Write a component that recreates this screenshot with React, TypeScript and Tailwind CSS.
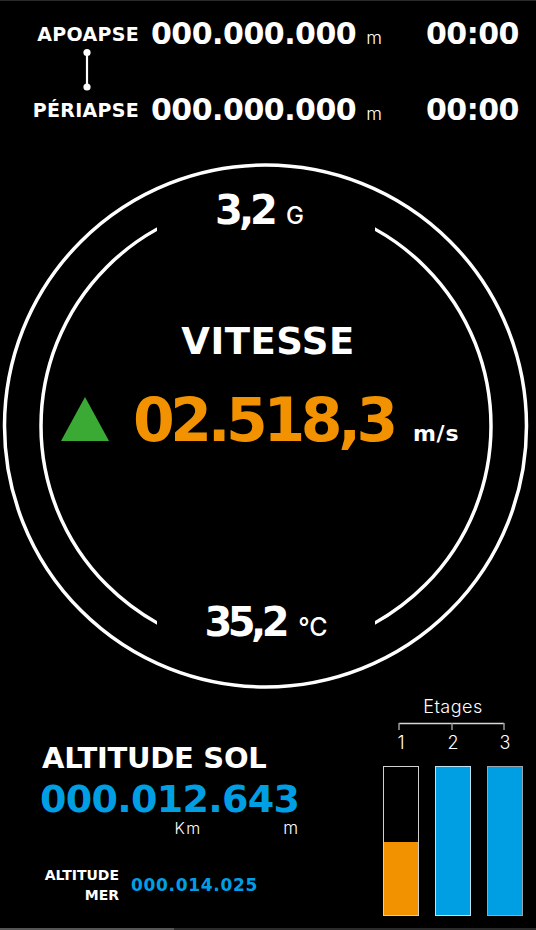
import React from "react";

const B = "font-['DejaVu_Sans',sans-serif] font-bold";
const L = "font-['Inter',sans-serif] font-light";
const M = "font-['Inter',sans-serif] font-medium";

const OrbitRow: React.FC<{ label: string }> = ({ label }) => (
  <div className="flex h-[30px] items-center">
    <span className={`w-[139px] text-right text-[19px] leading-none tracking-[0.3px] ${B}`}>{label}</span>
    <div className="ml-[12px] flex items-baseline">
      <span className={`text-[30px] leading-none tracking-[-0.5px] ${B}`}>000.000.000</span>
      <span className={`ml-[10px] text-[18px] leading-none ${L}`}>m</span>
    </div>
    <span className={`ml-auto mr-[17px] text-[30px] leading-none tracking-[-0.5px] ${B}`}>00:00</span>
  </div>
);

const Gauge: React.FC = () => (
  <div className="relative h-[540px]">
    <svg className="absolute inset-0" width="536" height="540" viewBox="0 0 536 540">
      <defs>
        <clipPath id="sides">
          <rect x="0" y="0" width="157" height="540" />
          <rect x="375" y="0" width="161" height="540" />
        </clipPath>
      </defs>
      <circle cx="265.5" cy="270" r="261" fill="none" stroke="#fff" strokeWidth="3.5" />
      <circle cx="266" cy="270" r="225" fill="none" stroke="#fff" strokeWidth="3.5" clipPath="url(#sides)" />
    </svg>

    <div className="relative flex flex-col items-center">
      <div className="flex items-baseline pt-[34px] pr-[17px]">
        <span className={`text-[40px] leading-none tracking-[-4px] ${B}`}>3,2</span>
        <span className={`ml-[12px] text-[24px] leading-none ${M}`}>G</span>
      </div>

      <div className={`mt-[93px] text-[37px] leading-none tracking-[0.5px] ${B}`}>VITESSE</div>

      <div className="mt-[30px] flex w-full items-baseline pl-[61px]">
        <svg width="48" height="44" viewBox="0 0 48 44">
          <polygon points="0,44 24,0 48,44" fill="#3aaa35" />
        </svg>
        <span className={`ml-[24px] text-[60px] leading-none tracking-[-4.4px] text-[#f39200] ${B}`}>02.518,3</span>
        <span className={`ml-[19px] text-[22px] leading-none tracking-[0.8px] ${B}`}>m/s</span>
      </div>

      <div className="mt-[152px] flex items-baseline pr-[4px]">
        <span className={`text-[40px] leading-none tracking-[-4.5px] ${B}`}>35,2</span>
        <span className={`ml-[13px] text-[25px] leading-none ${M}`}>°C</span>
      </div>
    </div>
  </div>
);

const Stages: React.FC = () => (
  <div className="ml-auto mr-[13px] flex w-[140px] flex-col pt-[1.5px]">
    <div className={`text-center text-[18px] leading-none tracking-[0.5px] ${L}`}>Etages</div>
    <svg width="140" height="14" viewBox="0 0 140 14">
      <line x1="16" y1="7.5" x2="121" y2="7.5" stroke="#d8d8d8" strokeWidth="1.5" />
      <line x1="16" y1="7" x2="16" y2="14" stroke="#9a9a9a" strokeWidth="1.5" />
      <line x1="69" y1="7" x2="69" y2="14" stroke="#9a9a9a" strokeWidth="1.5" />
      <line x1="121" y1="7" x2="121" y2="14" stroke="#9a9a9a" strokeWidth="1.5" />
    </svg>
    <div className={`mt-[4px] flex gap-[16px] text-[18px] leading-none ${L}`}>
      <span className="w-[36px] text-center">1</span>
      <span className="w-[36px] text-center">2</span>
      <span className="w-[36px] text-center">3</span>
    </div>
    <div className="mt-[14.5px] flex gap-[16px]">
      <div className="flex h-[150px] w-[36px] flex-col justify-end border border-[#d0d0d0] bg-black">
        <div className="h-[73px] bg-[#f39200]" />
      </div>
      <div className="h-[150px] w-[36px] border border-[#bfe2f5] bg-[#009fe3]" />
      <div className="h-[150px] w-[36px] border border-[#9aa4aa] bg-[#009fe3]" />
    </div>
  </div>
);

export default function App() {
  return (
    <div className="flex h-[930px] w-full flex-col overflow-hidden border-t border-[#2a2a2a] bg-black text-white">
      <div className="h-[155px] pt-[18px]">
        <OrbitRow label="APOAPSE" />
        <div className="h-[46px]">
          <svg className="ml-[80.5px] overflow-visible" width="12" height="46" viewBox="0 0 12 46">
            <line x1="6" y1="3.5" x2="6" y2="38" stroke="#fff" strokeWidth="2.2" />
            <circle cx="6" cy="3.5" r="3.6" fill="#fff" />
            <circle cx="6" cy="38" r="3.6" fill="#fff" />
          </svg>
        </div>
        <OrbitRow label="PÉRIAPSE" />
      </div>

      <Gauge />

      <div className="flex">
        <div className="pl-[42px] pt-[47.6px]">
          <div className={`text-[29px] leading-none tracking-[-0.3px] ${B}`}>ALTITUDE SOL</div>
          <div className={`-ml-[2px] mt-[7px] text-[38px] leading-none tracking-[-0.7px] text-[#009fe3] ${B}`}>000.012.643</div>
          <div className={`mt-[2px] flex w-[256px] text-[16px] leading-none ${L}`}>
            <span className="pl-[132.5px] tracking-[1.5px]">Km</span>
            <span className="ml-auto text-[17px]">m</span>
          </div>
          <div className="mt-[28.7px] flex items-center">
            <div className={`w-[77px] text-right text-[14px] leading-[20px] ${B}`}>
              ALTITUDE
              <br />
              MER
            </div>
            <span className={`ml-[12px] text-[17px] leading-none tracking-[0.7px] text-[#009fe3] ${B}`}>000.014.025</span>
          </div>
        </div>
        <Stages />
      </div>

      <div className="mt-auto flex h-[2px]">
        <div className="w-[174px] bg-[#555555]" />
        <div className="flex-1 bg-[#2b2b2b]" />
      </div>
    </div>
  );
}
